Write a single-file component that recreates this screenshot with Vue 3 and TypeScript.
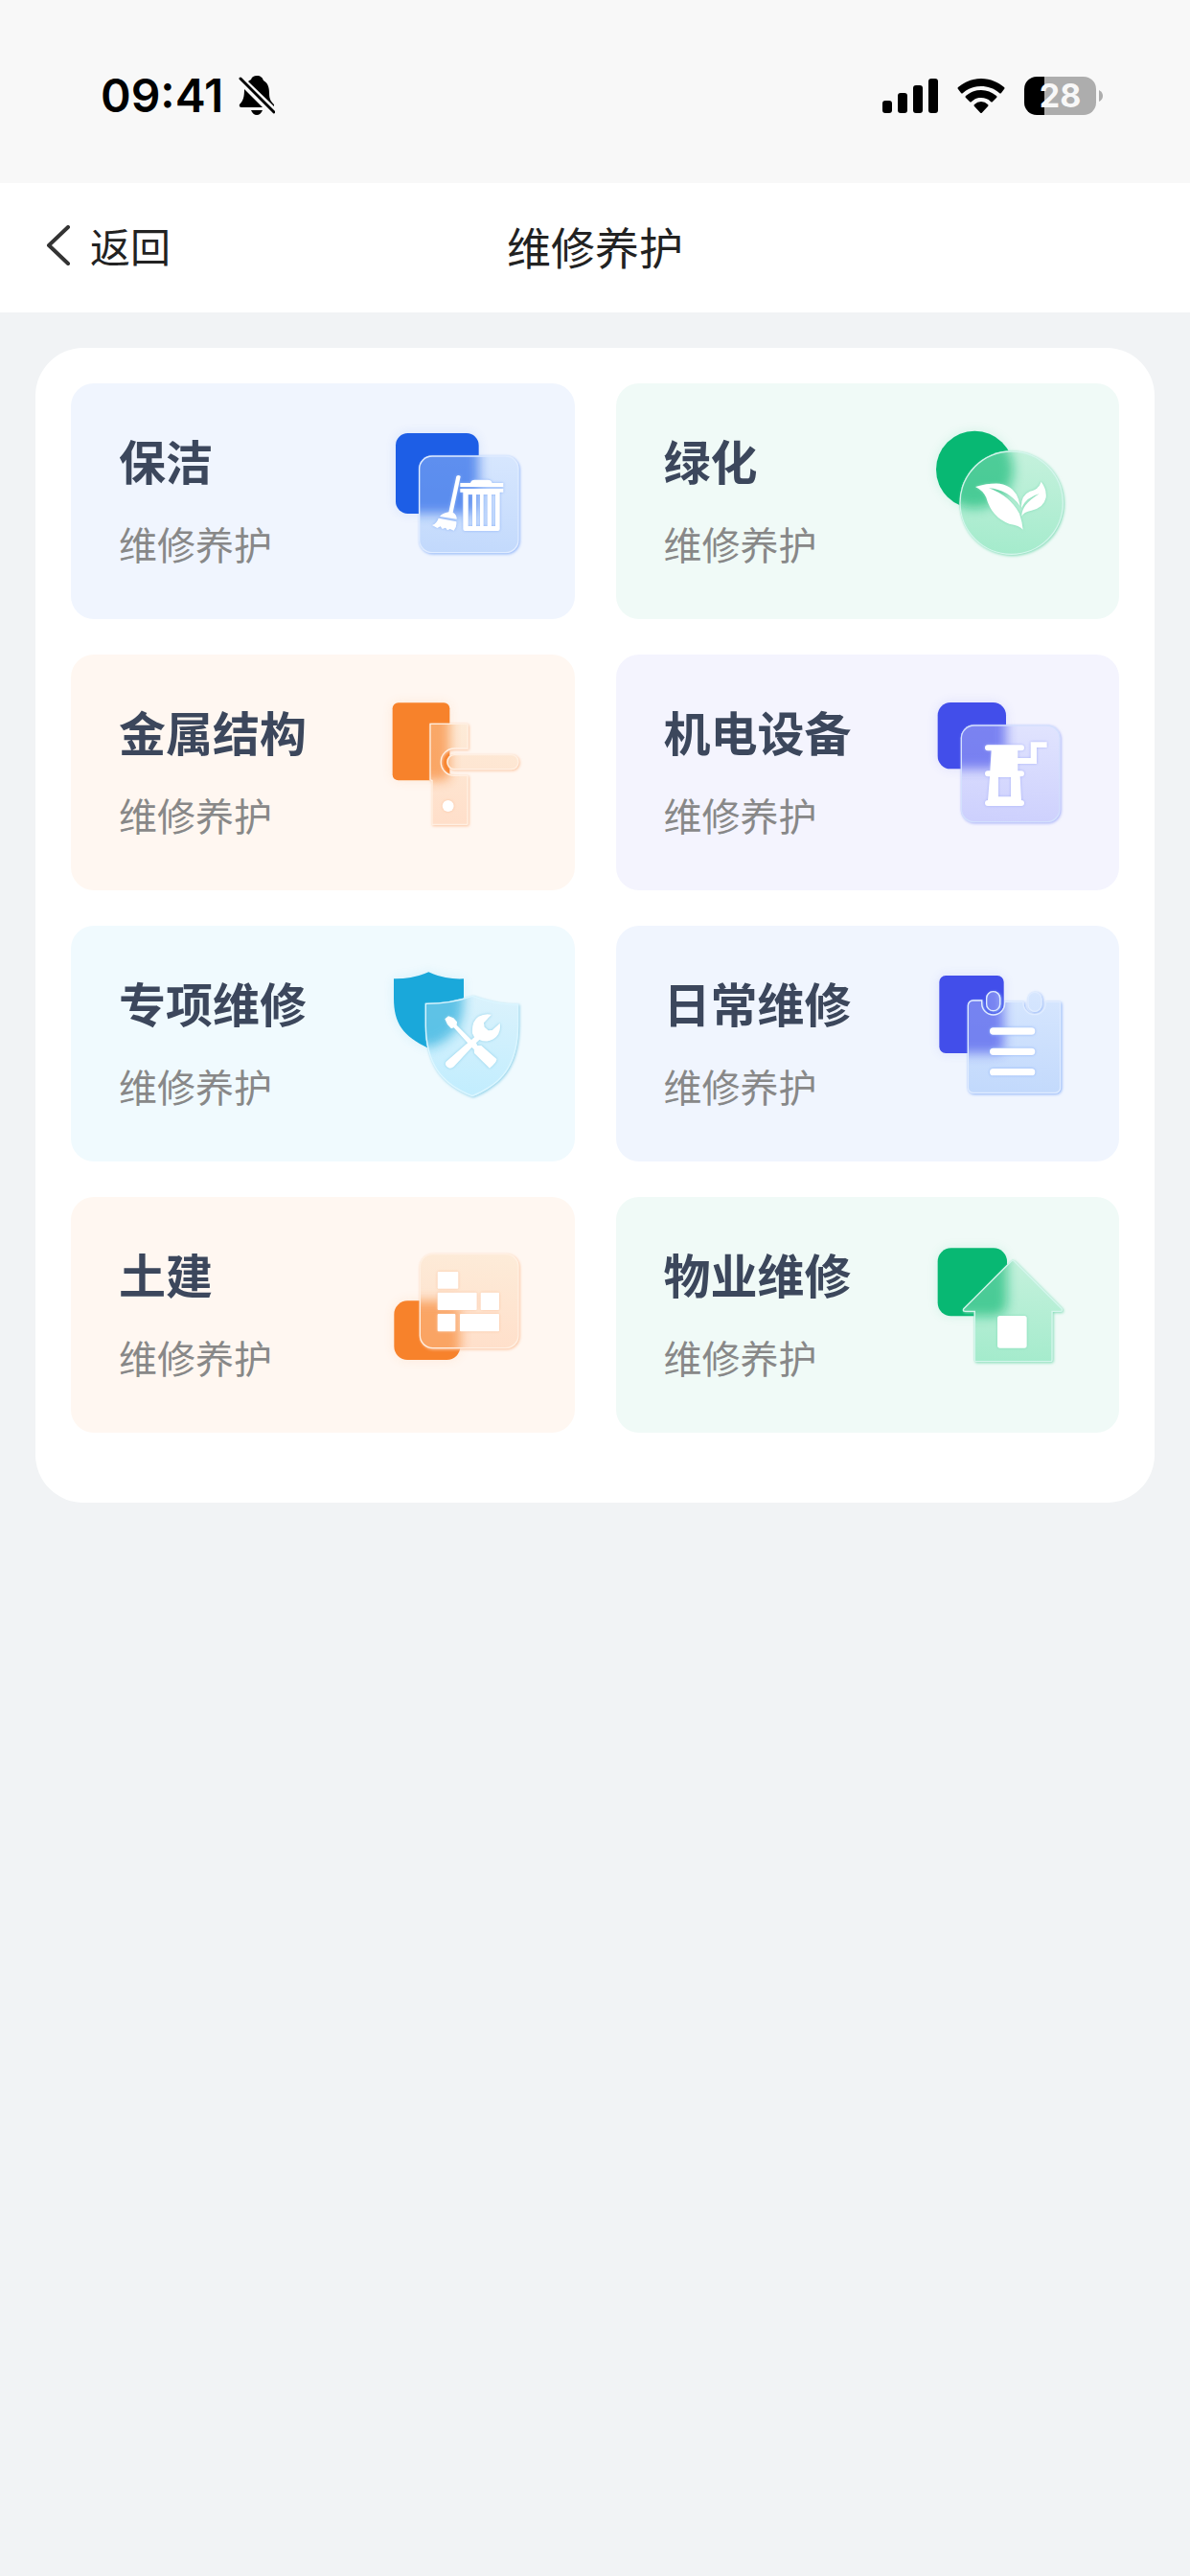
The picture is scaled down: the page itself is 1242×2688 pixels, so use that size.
<script setup lang="ts">
interface Tone {
  tile: string
  back: string
  glassTop: string
  glassBottom: string
  edge: string
  shade: string
}

interface Service {
  title: string
  subtitle: string
  tone: Tone
  viewBox: string
  back: string
  glass: string
  glyph: string
}

/** Rounded rectangle as path data. */
function rr(x: number, y: number, w: number, h: number, r: number): string {
  return (
    `M${x + r} ${y}h${w - 2 * r}a${r} ${r} 0 0 1 ${r} ${r}v${h - 2 * r}` +
    `a${r} ${r} 0 0 1 ${-r} ${r}h${2 * r - w}a${r} ${r} 0 0 1 ${-r} ${-r}v${2 * r - h}` +
    `a${r} ${r} 0 0 1 ${r} ${-r}z`
  )
}

function disc(cx: number, cy: number, r: number): string {
  return `M${cx - r} ${cy}a${r} ${r} 0 1 1 ${2 * r} 0a${r} ${r} 0 1 1 ${-2 * r} 0z`
}

const blue: Tone = { tile: '#f0f5fe', back: '#1d5ee6', glassTop: '#d6e6fe', glassBottom: '#c2d9fc', edge: '#e0ecff', shade: '#8fb4f8' }
const green: Tone = { tile: '#f0faf7', back: '#08b873', glassTop: '#c4f1dc', glassBottom: '#a4ebcc', edge: '#d4f5ec', shade: '#84dcb8' }
const orange: Tone = { tile: '#fff7f1', back: '#f7822b', glassTop: '#fdebd8', glassBottom: '#ffdfca', edge: '#fff0e3', shade: '#fbc4a0' }
const violet: Tone = { tile: '#f4f4fe', back: '#424eea', glassTop: '#e0e3fe', glassBottom: '#cdd0fd', edge: '#d3e0fd', shade: '#a9b2f8' }
const cyan: Tone = { tile: '#f0fafe', back: '#1aa8da', glassTop: '#daf2fc', glassBottom: '#c1edfe', edge: '#dcf6ff', shade: '#8fd0e8' }
const indigo: Tone = { ...blue, back: '#424eea' }

const services: Service[] = [
  {
    title: '保洁',
    subtitle: '维修养护',
    tone: blue,
    viewBox: '0 0 510 510',
    back: rr(66, 66, 260, 252, 38),
    glass: rr(138, 136, 314, 306, 42),
    glyph:
      'M268 222H300Q302 212 314 212H354Q366 212 368 222H403V234H268ZM268 240H403V251H392V366Q392 372 386 372H283Q277 372 277 366V251H268Z' +
      'M293 258V357H306V258ZM318 258V357H330V258ZM341 258V357H353V258ZM366 258V357H378V258Z' +
      'M256 201Q262 195 269 201L245 314Q258 322 257 335L204 327Q212 316 232 313Z' +
      'M200 332L256 343Q258 360 248 371L236 366L228 370L222 362L212 366L206 358L196 363L180 354Q195 348 200 332Z',
  },
  {
    title: '绿化',
    subtitle: '维修养护',
    tone: green,
    viewBox: '-3 0 510 510',
    back: disc(172, 180, 121),
    glass: disc(287, 284, 163),
    glyph:
      'M174 234Q215 222 250 224Q305 232 314 294Q275 242 216 238Q282 262 312 318Q321 345 323 368Q312 355 280 350Q225 330 208 268Q198 245 174 234Z' +
      'M318 300Q316 260 345 248Q372 243 380 218Q398 240 395 268Q388 300 350 308Q325 312 319 326Q318 290 374 256Q335 266 318 300Z',
  },
  {
    title: '金属结构',
    subtitle: '维修养护',
    tone: orange,
    viewBox: '0 -6 510 510',
    back: rr(56, 55, 179, 243, 18),
    glass: 'M172 119H287Q293 119 293 125V200H250A40 40 0 0 0 250 281H293V434Q293 438 287 438H178V300L172 298Z' + rr(226, 216, 226, 49, 24),
    glyph: disc(230, 378, 18),
  },
  {
    title: '机电设备',
    subtitle: '维修养护',
    tone: violet,
    viewBox: '-3 -6 510 510',
    back: rr(56, 54, 214, 208, 40),
    glass: rr(128, 124, 312, 306, 42),
    glyph:
      'M213 187H318A9 9 0 0 1 318 205H307V228H347V178H398V195H366V246H307V268H318A9 9 0 0 1 318 286H314L318 360A9 9 0 0 1 318 378H213A9 9 0 0 1 213 360L219 286H213A9 9 0 0 1 213 268H220L224 205H213A9 9 0 0 1 213 187Z' +
      'M246 288V349H285V288Z',
  },
  {
    title: '专项维修',
    subtitle: '维修养护',
    tone: cyan,
    viewBox: '0 3 510 510',
    back: 'M60 79Q120 80 169 58Q220 82 279 79V140C277 230 250 265 168 296C90 258 60 220 60 140Z',
    glass: 'M158 155Q235 156 306 131Q385 160 451 157V225C449 345 405 408 306 448C205 408 160 345 158 225Z',
    glyph:
      'M220 205L231 196L247 202L258 214L257 224L303 270L312 262L306 250Q303 212 325 197Q345 186 366 191L342 217L344 230L356 241L368 240L392 218Q398 250 372 268Q350 280 328 270L318 280L322 288L334 288L382 330Q384 340 360 359L312 312L311 300L304 294L248 354Q236 364 226 354Q218 346 224 338L291 280L248 232L240 235L228 222Z',
  },
  {
    title: '日常维修',
    subtitle: '维修养护',
    tone: indigo,
    viewBox: '-3 3 510 510',
    back: rr(61, 69, 202, 243, 20),
    glass:
      'M167 145H196V156A34 34 0 0 0 264 156V149H326V156A33 33 0 0 0 392 156V149H436Q442 149 442 155V420A18 18 0 0 1 424 438H167A18 18 0 0 1 149 420V163A18 18 0 0 1 167 145Z' +
      rr(207, 117, 46, 64, 23) +
      rr(337, 119, 46, 64, 23),
    glyph: rr(219, 232, 142, 22, 11) + rr(219, 296, 142, 22, 11) + rr(219, 360, 142, 22, 11),
  },
  {
    title: '土建',
    subtitle: '维修养护',
    tone: orange,
    viewBox: '0 -3 510 510',
    back: rr(61, 232, 207, 185, 42),
    glass: rr(140, 84, 312, 298, 42),
    glyph: rr(197, 141, 65, 53, 3) + rr(197, 206, 123, 55, 3) + rr(332, 206, 58, 55, 3) + rr(197, 273, 56, 55, 3) + rr(267, 273, 123, 55, 3),
  },
  {
    title: '物业维修',
    subtitle: '维修养护',
    tone: green,
    viewBox: '-3 -3 510 510',
    back: rr(56, 67, 217, 213, 42),
    glass: 'M286 106Q291 101 296 106L446 256Q450 267 440 267H416V418Q416 424 410 424H176Q170 424 170 418V267H142Q130 266 136 256Z',
    glyph: rr(243, 279, 92, 101, 8),
  },
]
</script>

<template>
  <div class="screen">
    <header class="status">
      <div class="clock">
        <span class="time">09:41</span>
        <svg class="bell" viewBox="0 0 38 42" aria-hidden="true">
          <path d="M19 0C23 0 25 2 26 5C31 8 32 13 32 18C32 25 34 27 37 30V32L10 6Q11 5 13 4C14 1 16 0 19 0ZM6 14L25 33H3Q0 33 1 30C5 26 6 22 6 14ZM13 36H25Q23 41 19 41T13 36Z" />
          <path d="M2 3L37 38" fill="none" stroke="#000" stroke-width="3" stroke-linecap="round" />
        </svg>
      </div>
      <div class="indicators">
        <svg class="signal" viewBox="0 0 58 36" aria-hidden="true">
          <rect x="0" y="23" width="10" height="13" rx="3" />
          <rect x="16" y="15" width="10" height="21" rx="3" />
          <rect x="32" y="7" width="10" height="29" rx="3" />
          <rect x="48" y="0" width="10" height="36" rx="3" />
        </svg>
        <svg class="wifi" viewBox="0 0 50 36" aria-hidden="true">
          <path d="M25 0C35 0 43 4 49 9Q50 10 49 11L46 15Q45 16 44 15C38 10 32 8 25 8S12 10 6 15Q5 16 4 15L1 11Q0 10 1 9C7 4 15 0 25 0Z" />
          <path d="M25 12C31 12 36 14 41 18Q42 19 41 20L37 24Q36 25 35 24C32 21 29 20 25 20S18 21 15 24Q14 25 13 24L9 20Q8 19 9 18C14 14 19 12 25 12Z" />
          <path d="M25 24Q29 24 32 27Q33 28 32 29L26 35.500Q25 36.500 24 35.500L18 29Q17 28 18 27Q21 24 25 24Z" />
        </svg>
        <div class="battery">
          <span class="level">28</span>
          <svg class="tip" viewBox="0 0 4 12" aria-hidden="true"><path d="M0 0Q4 2 4 6T0 12Z" /></svg>
        </div>
      </div>
    </header>

    <nav class="bar">
      <button class="back" type="button">
        <svg class="chevron" viewBox="0 0 26 42" aria-hidden="true"><path d="M23 2L3 21L23 40" /></svg>
        <span>返回</span>
      </button>
      <h1 class="heading">维修养护</h1>
    </nav>

    <main class="panel">
      <a
        v-for="(s, i) in services"
        :key="s.title"
        class="tile"
        href="#"
        :style="{ backgroundColor: s.tone.tile }"
      >
        <span class="copy">
          <span class="title">{{ s.title }}</span>
          <span class="subtitle">{{ s.subtitle }}</span>
        </span>
        <svg class="icon" :viewBox="s.viewBox" aria-hidden="true">
          <defs>
            <linearGradient :id="`glass-${i}`" x1="0.5" y1="0" x2="0.4" y2="1">
              <stop offset="0" :stop-color="s.tone.glassTop" />
              <stop offset="1" :stop-color="s.tone.glassBottom" />
            </linearGradient>
            <clipPath :id="`clip-${i}`"><path :d="s.glass" /></clipPath>
            <filter :id="`frost-${i}`" x="-30%" y="-30%" width="160%" height="160%">
              <feGaussianBlur stdDeviation="17" />
            </filter>
            <filter :id="`soft-${i}`" x="-30%" y="-30%" width="160%" height="160%">
              <feGaussianBlur stdDeviation="4" />
            </filter>
          </defs>
          <path :d="s.back" :fill="s.tone.back" opacity="0.12" :filter="`url(#frost-${i})`" />
          <path :d="s.back" :fill="s.tone.back" />
          <path :d="s.glass" :fill="s.tone.shade" transform="translate(3 3)" :filter="`url(#soft-${i})`" />
          <path :d="s.glass" :fill="`url(#glass-${i})`" />
          <g :clip-path="`url(#clip-${i})`">
            <path :d="s.back" :fill="s.tone.back" opacity="0.64" :filter="`url(#frost-${i})`" />
            <path :d="s.glass" fill="none" :stroke="s.tone.edge" stroke-width="8" />
            <path :d="s.glyph" :fill="s.tone.shade" fill-rule="evenodd" :filter="`url(#soft-${i})`" />
          </g>
          <path :d="s.glyph" fill="#fff" fill-rule="evenodd" />
        </svg>
      </a>
    </main>
  </div>
</template>

<style>
body {
  margin: 0;
  background: #f1f3f5;
}
</style>

<style scoped>
.screen {
  min-height: 100vh;
  background: #f1f3f5;
  font-family: "Noto Sans CJK SC", sans-serif;
}

.status {
  display: flex;
  align-items: center;
  justify-content: space-between;
  box-sizing: border-box;
  height: 191px;
  padding: 9px 91px 0 105px;
  background: #f8f8f8;
  font-family: Inter, sans-serif;
}

.clock,
.indicators {
  display: flex;
  align-items: center;
}

.clock {
  gap: 16px;
}

.time {
  font-size: 48px;
  font-weight: 600;
  line-height: 56px;
  color: #000;
}

.bell {
  width: 38px;
  height: 42px;
}

.indicators {
  gap: 20px;
}

.signal {
  width: 58px;
  height: 36px;
}

.wifi {
  width: 50px;
  height: 36px;
}

.battery {
  display: flex;
  align-items: center;
  gap: 3px;
}

.level {
  width: 75px;
  border-radius: 13px;
  background: linear-gradient(90deg, #000 28%, #adadad 28%);
  font-size: 34px;
  font-weight: 700;
  line-height: 40px;
  text-align: center;
  color: #f8f8f8;
}

.tip {
  width: 4px;
  height: 12px;
  fill: #adadad;
}

.bar {
  display: grid;
  grid-template-columns: 1fr auto 1fr;
  align-items: center;
  box-sizing: border-box;
  height: 135px;
  padding: 0 48px 6px;
  background: #fff;
  color: #222;
}

.back {
  display: flex;
  align-items: center;
  justify-self: start;
  gap: 20px;
  padding: 0;
  border: 0;
  background: none;
  color: inherit;
  font-family: inherit;
  font-size: 42px;
  line-height: 56px;
}

.chevron {
  width: 26px;
  height: 42px;
  fill: none;
  stroke: #333;
  stroke-width: 4;
  stroke-linecap: round;
  stroke-linejoin: round;
}

.heading {
  margin: 0;
  font-size: 46px;
  font-weight: 400;
  line-height: 56px;
}

.panel {
  display: grid;
  grid-template-columns: 1fr 1fr;
  gap: 37px 43px;
  margin: 37px;
  padding: 37px 37px 73px;
  border-radius: 50px;
  background: #fff;
}

.tile {
  display: flex;
  justify-content: space-between;
  padding: 30px 39px 46px 50px;
  border-radius: 24px;
  text-decoration: none;
}

.copy {
  display: flex;
  flex-direction: column;
  gap: 23px;
  padding-top: 14px;
}

.title {
  font-size: 49px;
  font-weight: 700;
  line-height: 72px;
  color: #3c475c;
}

.subtitle {
  font-size: 40px;
  line-height: 56px;
  color: #888;
}

.icon {
  flex: none;
  width: 170px;
  height: 170px;
}
</style>
